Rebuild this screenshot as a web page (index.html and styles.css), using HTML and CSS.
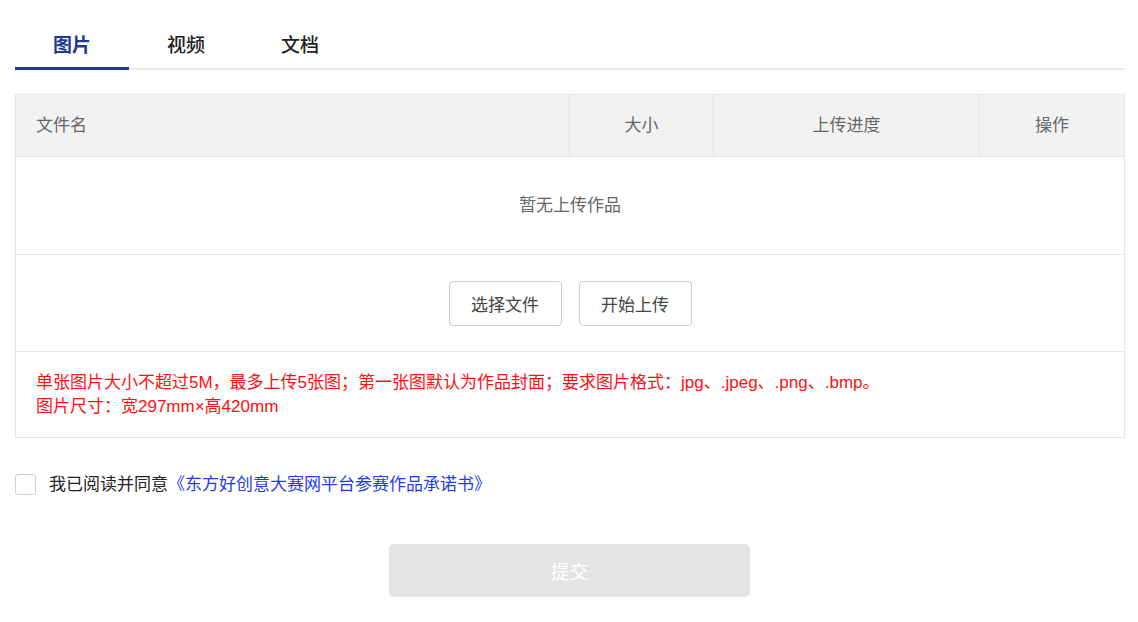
FILE: index.html
```html
<!DOCTYPE html>
<html lang="zh">
<head>
<meta charset="utf-8">
<link rel="stylesheet" href="styles.css">
</head>
<body>
<div class="page">
  <div class="tabs">
    <div class="tab active">图片</div>
    <div class="tab">视频</div>
    <div class="tab">文档</div>
  </div>

  <table class="files">
    <colgroup>
      <col class="c-name"><col class="c-size"><col class="c-prog"><col class="c-op">
    </colgroup>
    <thead>
      <tr>
        <th class="left">文件名</th>
        <th>大小</th>
        <th>上传进度</th>
        <th>操作</th>
      </tr>
    </thead>
    <tbody>
      <tr class="empty"><td colspan="4">暂无上传作品</td></tr>
      <tr class="actions">
        <td colspan="4">
          <div class="btns">
            <button class="btn">选择文件</button>
            <button class="btn">开始上传</button>
          </div>
        </td>
      </tr>
      <tr class="note">
        <td colspan="4">单张图片大小不超过5M，最多上传5张图；第一张图默认为作品封面；要求图片格式：jpg、.jpeg、.png、.bmp。<br>图片尺寸：宽297mm×高420mm</td>
      </tr>
    </tbody>
  </table>

  <label class="agree">
    <span class="check"></span>
    <span class="agree-text">我已阅读并同意<a class="link">《东方好创意大赛网平台参赛作品承诺书》</a></span>
  </label>

  <div class="submit-wrap">
    <button class="submit">提交</button>
  </div>
</div>
</body>
</html>
```

FILE: styles.css
```css
* { box-sizing: border-box; }
html, body { margin: 0; padding: 0; background: #fff; }
body {
  font-family: "Liberation Sans", "Noto Sans CJK SC", sans-serif;
  color: #333;
}
.page {
  padding: 20px 14px 0 15px;
}
.tabs {
  display: flex;
  border-bottom: 2px solid #e9e9e9;
  height: 50px;
}
.tab {
  width: 114px;
  text-align: center;
  font-size: 19px;
  padding-top: 4px;
  line-height: 44px;
  height: 50px;
  color: #222;
  font-weight: 500;
  border-bottom: 3px solid transparent;
}
.tab.active {
  color: #1c3b8f;
  font-weight: 700;
  border-bottom-color: #1c3b8f;
}
.files {
  width: 100%;
  margin-top: 24px;
  border-collapse: collapse;
  table-layout: fixed;
  font-size: 17px;
  color: #666;
}
.c-name { width: 554px; }
.c-size { width: 144px; }
.c-prog { width: 266px; }
.c-op { width: 145px; }
.files th, .files td {
  border: 1px solid #e6e6e6;
  font-weight: 400;
  padding: 0;
}
.files th {
  background: #f2f2f2;
  height: 62px;
  text-align: center;
  line-height: 24px;
}
.files th.left {
  text-align: left;
  padding-left: 20px;
}
.empty td {
  height: 98px;
  text-align: center;
  line-height: 24px;
}
.actions td { height: 97px; }
.btns {
  display: flex;
  justify-content: center;
  gap: 17px;
}
.btn {
  width: 113px;
  height: 45px;
  border: 1px solid #cccccc;
  border-radius: 4px;
  background: #fff;
  font-family: inherit;
  font-size: 17px;
  color: #444;
  padding: 0;
}
.note td {
  height: 86px;
  padding: 0 20px;
  color: #ff0f0f;
  font-size: 17px;
  line-height: 24px;
}
.agree {
  display: flex;
  align-items: center;
  margin-top: 36px;
  height: 21px;
}
.check {
  width: 21px;
  height: 21px;
  border: 1px solid #cfcfcf;
  border-radius: 3px;
  background: #fff;
  flex: none;
}
.agree-text {
  margin-left: 13px;
  font-size: 17px;
  color: #222;
  line-height: 21px;
}
.link {
  color: #1f3cf2;
  text-decoration: none;
}
.submit-wrap {
  display: flex;
  justify-content: center;
  margin-top: 49px;
}
.submit {
  width: 361px;
  height: 53px;
  border: none;
  border-radius: 5px;
  background: #e4e4e4;
  color: #fff;
  font-family: inherit;
  font-size: 19px;
  padding: 0;
}
```
